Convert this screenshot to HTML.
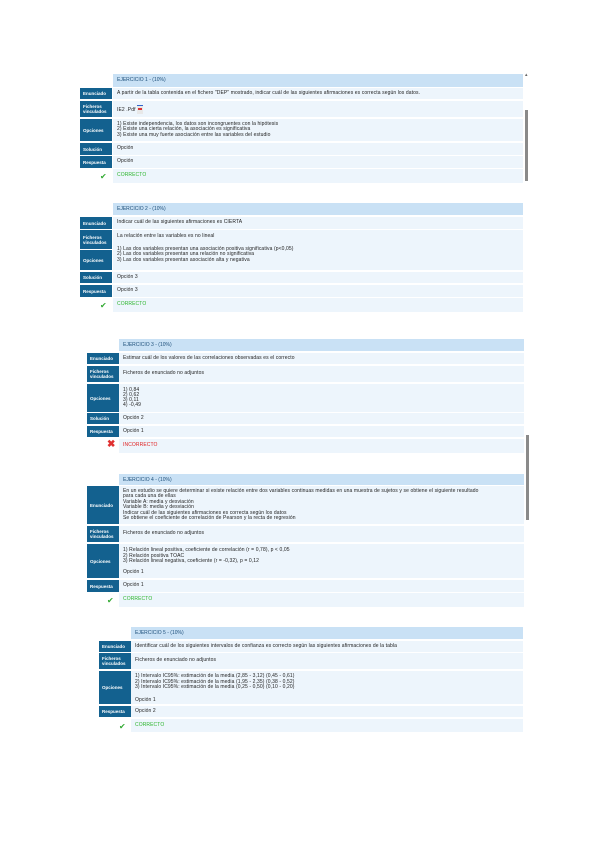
<!DOCTYPE html><html><head><style>
body{margin:0;width:600px;height:848px;background:#fff;position:relative;overflow:hidden;font-family:"Liberation Sans",sans-serif;}
div{position:absolute;box-sizing:border-box;}
.h{background:#c9e1f5;color:#1d4f7a;font-size:5px;padding:3px 4px;line-height:6px;}
.l{background:#13618f;color:#fff;font-size:4.5px;font-weight:bold;line-height:5px;display:flex;align-items:center;padding-left:3px;}
.c{background:#edf5fc;color:#222;font-size:5px;line-height:5.5px;padding:2px 4px;display:flex;flex-direction:column;justify-content:center;letter-spacing:0.1px;}
.ok{color:#2db52d;}
.bad{color:#e02020;}
.sb{background:#8a8a8a;width:3px;}
</style></head><body>

<div class="h" style="left:113px;top:74px;width:410px;height:13px">EJERCICIO 1 - (10%)</div>
<div class="l" style="left:80px;top:88px;width:32px;height:11px">Enunciado</div>
<div class="c" style="left:113px;top:88px;width:410px;height:11px">A partir de la tabla contenida en el fichero "DEP" mostrado, indicar cuál de las siguientes afirmaciones es correcta según los datos.</div>
<div class="l" style="left:80px;top:101px;width:32px;height:16px">Ficheros<br>vinculados</div>
<div class="c" style="left:113px;top:101px;width:410px;height:16px"><span>IE2 .Pdf <span style="display:inline-block;width:6px;height:8px;background:#e8e8e8;border-top:1px solid #36c;vertical-align:middle"><span style="display:block;margin:2px 1px;width:4px;height:2px;background:#d33"></span></span></span></div>
<div class="l" style="left:80px;top:119px;width:32px;height:22px">Opciones</div>
<div class="c" style="left:113px;top:119px;width:410px;height:22px"><span>1) Existe independencia, los datos son incongruentes con la hipótesis</span><span>2) Existe una cierta relación, la asociación es significativa</span><span>3) Existe una muy fuerte asociación entre las variables del estudio</span></div>
<div class="l" style="left:80px;top:143px;width:32px;height:12px">Solución</div>
<div class="c" style="left:113px;top:143px;width:410px;height:12px">Opción</div>
<div class="l" style="left:80px;top:156px;width:32px;height:12px">Respuesta</div>
<div class="c" style="left:113px;top:156px;width:410px;height:12px">Opción</div>
<div style="left:100px;top:172px;color:#3a3;font-size:8px">✔</div>
<div class="c ok" style="left:113px;top:169px;width:410px;height:14px">CORRECTO</div>

<div class="h" style="left:113px;top:203px;width:410px;height:12px">EJERCICIO 2 - (10%)</div>
<div class="l" style="left:80px;top:217px;width:32px;height:12px">Enunciado</div>
<div class="c" style="left:113px;top:217px;width:410px;height:12px">Indicar cuál de las siguientes afirmaciones es CIERTA</div>
<div class="l" style="left:80px;top:230px;width:32px;height:19px">Ficheros<br>vinculados</div>
<div class="c" style="left:113px;top:230px;width:410px;height:40px;justify-content:flex-start;padding-top:4px"><span>La relación entre las variables es no lineal</span><span style="margin-top:7px">1) Las dos variables presentan una asociación positiva significativa (p&lt;0,05)</span><span>2) Las dos variables presentan una relación no significativa</span><span>3) Las dos variables presentan asociación alta y negativa</span></div>
<div class="l" style="left:80px;top:250px;width:32px;height:20px">Opciones</div>
<div class="l" style="left:80px;top:272px;width:32px;height:11px">Solución</div>
<div class="c" style="left:113px;top:272px;width:410px;height:11px">Opción 3</div>
<div class="l" style="left:80px;top:285px;width:32px;height:12px">Respuesta</div>
<div class="c" style="left:113px;top:285px;width:410px;height:12px">Opción 3</div>
<div style="left:100px;top:301px;color:#3a3;font-size:8px">✔</div>
<div class="c ok" style="left:113px;top:298px;width:410px;height:14px">CORRECTO</div>

<div class="h" style="left:119px;top:339px;width:405px;height:12px">EJERCICIO 3 - (10%)</div>
<div class="l" style="left:87px;top:353px;width:32px;height:11px">Enunciado</div>
<div class="c" style="left:119px;top:353px;width:405px;height:11px">Estimar cuál de los valores de las correlaciones observadas es el correcto</div>
<div class="l" style="left:87px;top:366px;width:32px;height:16px">Ficheros<br>vinculados</div>
<div class="c" style="left:119px;top:366px;width:405px;height:16px">Ficheros de enunciado no adjuntos</div>
<div class="l" style="left:87px;top:384px;width:32px;height:28px">Opciones</div>
<div class="c" style="left:119px;top:384px;width:405px;height:28px;line-height:5px"><span>1) 0,84</span><span>2) 0,62</span><span>3) 0,11</span><span>4) -0,49</span></div>
<div class="l" style="left:87px;top:413px;width:32px;height:11px">Solución</div>
<div class="c" style="left:119px;top:413px;width:405px;height:11px">Opción 2</div>
<div class="l" style="left:87px;top:426px;width:32px;height:11px">Respuesta</div>
<div class="c" style="left:119px;top:426px;width:405px;height:11px">Opción 1</div>
<div style="left:107px;top:439px;color:#e03030;font-size:10px;font-weight:bold">✖</div>
<div class="c bad" style="left:119px;top:439px;width:405px;height:14px">INCORRECTO</div>

<div class="h" style="left:119px;top:474px;width:405px;height:11px">EJERCICIO 4 - (10%)</div>
<div class="l" style="left:87px;top:486px;width:32px;height:38px">Enunciado</div>
<div class="c" style="left:119px;top:486px;width:405px;height:38px"><span>En un estudio se quiere determinar si existe relación entre dos variables continuas medidas en una muestra de sujetos y se obtiene el siguiente resultado</span><span>para cada una de ellas</span><span>Variable A: media y desviación</span><span>Variable B: media y desviación</span><span>Indicar cuál de las siguientes afirmaciones es correcta según los datos</span><span>Se obtiene el coeficiente de correlación de Pearson y la recta de regresión</span></div>
<div class="l" style="left:87px;top:526px;width:32px;height:16px">Ficheros<br>vinculados</div>
<div class="c" style="left:119px;top:526px;width:405px;height:16px">Ficheros de enunciado no adjuntos</div>
<div class="l" style="left:87px;top:544px;width:32px;height:34px">Opciones</div>
<div class="c" style="left:119px;top:544px;width:405px;height:34px;justify-content:flex-start;padding-top:4px"><span>1) Relación lineal positiva, coeficiente de correlación (r = 0,78), p &lt; 0,05</span><span>2) Relación positiva TOAC</span><span>3) Relación lineal negativa, coeficiente (r = -0,32), p = 0,12</span><span style="margin-top:5px">Opción 1</span></div>
<div class="l" style="left:87px;top:580px;width:32px;height:12px">Respuesta</div>
<div class="c" style="left:119px;top:580px;width:405px;height:12px">Opción 1</div>
<div style="left:107px;top:596px;color:#3a3;font-size:8px">✔</div>
<div class="c ok" style="left:119px;top:593px;width:405px;height:14px">CORRECTO</div>

<div class="h" style="left:131px;top:627px;width:392px;height:12px">EJERCICIO 5 - (10%)</div>
<div class="l" style="left:99px;top:641px;width:32px;height:11px">Enunciado</div>
<div class="c" style="left:131px;top:641px;width:392px;height:11px">Identificar cuál de los siguientes intervalos de confianza es correcto según las siguientes afirmaciones de la tabla</div>
<div class="l" style="left:99px;top:653px;width:32px;height:16px">Ficheros<br>vinculados</div>
<div class="c" style="left:131px;top:653px;width:392px;height:16px">Ficheros de enunciado no adjuntos</div>
<div class="l" style="left:99px;top:671px;width:32px;height:33px">Opciones</div>
<div class="c" style="left:131px;top:671px;width:392px;height:33px;justify-content:flex-start;padding-top:3px"><span>1) Intervalo IC95%: estimación de la media (2,85 - 3,12) (0,45 - 0,61)</span><span>2) Intervalo IC95%: estimación de la media (1,95 - 2,35) (0,38 - 0,52)</span><span>3) Intervalo IC95%: estimación de la media (0,25 - 0,50) (0,10 - 0,20)</span><span style="margin-top:7px">Opción 1</span></div>
<div class="l" style="left:99px;top:706px;width:32px;height:11px">Respuesta</div>
<div class="c" style="left:131px;top:706px;width:392px;height:11px">Opción 2</div>
<div style="left:119px;top:722px;color:#3a3;font-size:8px">✔</div>
<div class="c ok" style="left:131px;top:719px;width:392px;height:13px">CORRECTO</div>

<div style="left:525px;top:72px;font-size:5px;color:#666">▴</div>
<div class="sb" style="left:525px;top:110px;height:71px"></div>
<div class="sb" style="left:526px;top:435px;height:85px"></div>
</body></html>
